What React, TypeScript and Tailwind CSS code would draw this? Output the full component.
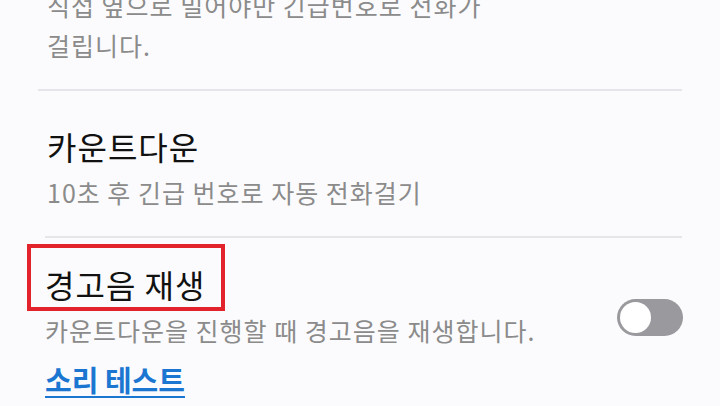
import React from "react";

export default function App() {
  return (
    <div
      className="w-[720px] h-[406px] overflow-hidden bg-[#fbfbfd] flex flex-col"
      style={{ fontFamily: '"Noto Sans CJK KR", "Noto Sans", sans-serif' }}
    >
      <div className="pl-[47px] pr-[38px] mt-[-15px] text-[25px] leading-[40px] tracking-[1px] text-[#8b8b8b]">
        <p>직접 옆으로 밀어야만 긴급번호로 전화가</p>
        <p>걸립니다.</p>
      </div>
      <div className="mt-[24px] mx-[38px] h-[2px] bg-[#e6e6ea]" />

      <div className="pl-[47px] pr-[38px] pt-[35px] flex flex-col">
        <p className="text-[32px] leading-[40px] tracking-[1px] text-[#111111]">카운트다운</p>
        <p className="mt-[11px] text-[25px] leading-[30px] tracking-[1px] text-[#8b8b8b]">
          10초 후 긴급 번호로 자동 전화걸기
        </p>
      </div>
      <div className="mt-[29px] ml-[45px] mr-[38px] h-[2px] bg-[#e6e6ea]" />

      <div className="pl-[45px] pr-[37px] pt-[26px] flex flex-row justify-between">
        <div className="flex flex-col items-start">
          <div className="relative">
            <p className="text-[32px] leading-[40px] tracking-[1px] text-[#111111]">경고음 재생</p>
            <div className="absolute left-[-18px] right-[-20px] top-[-20px] bottom-[-7px] border-[4px] border-[#e3232b]" />
          </div>
          <p className="mt-[11px] text-[25px] leading-[30px] tracking-[1px] text-[#8b8b8b]">
            카운트다운을 진행할 때 경고음을 재생합니다.
          </p>
          <a className="mt-[16px] text-[29px] leading-[36px] font-bold text-[#1b76d2] underline decoration-2 underline-offset-[4px]">
            소리 테스트
          </a>
        </div>
        <div className="mt-[35px] w-[66px] h-[37px] rounded-full bg-[#9a9a9e] p-[3px] flex items-center">
          <div className="w-[31px] h-[31px] rounded-full bg-white" />
        </div>
      </div>
    </div>
  );
}
